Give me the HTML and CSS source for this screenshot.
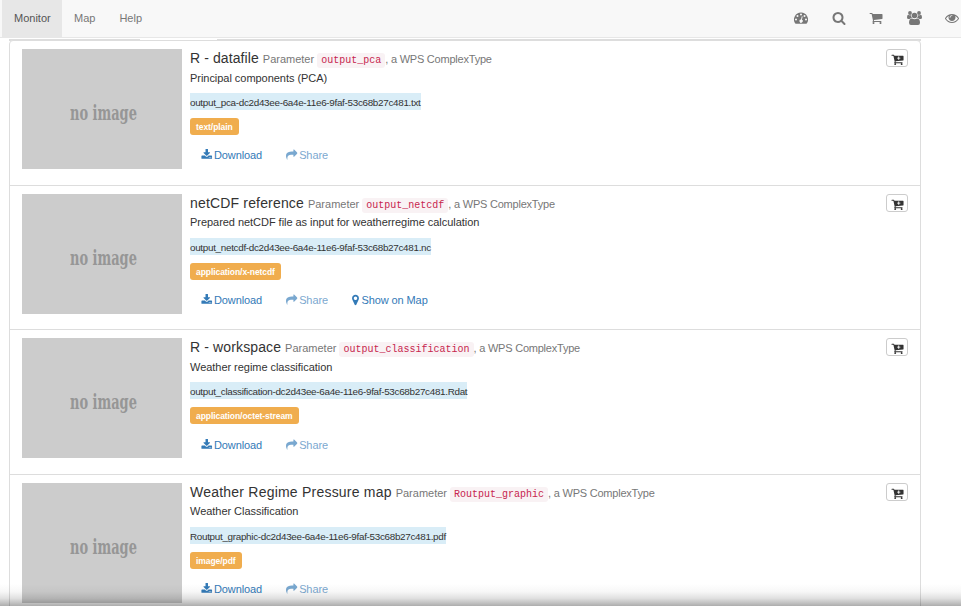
FILE: index.html
```html
<!DOCTYPE html>
<html lang="en">
<head>
<meta charset="utf-8">
<title>Monitor</title>
<link rel="stylesheet" href="styles.css">
</head>
<body>
<svg class="defs" width="0" height="0">
  <symbol id="search" viewBox="0 0 1792 1792"><path d="M1216 832q0-185-131.500-316.500t-316.500-131.500-316.500 131.500-131.500 316.500 131.500 316.500 316.500 131.500 316.500-131.500 131.500-316.500zm512 832q0 52-38 90t-90 38q-54 0-90-38l-343-342q-179 124-399 124-143 0-273.500-55.500t-225-150-150-225-55.500-273.500 55.500-273.500 150-225 225-150 273.500-55.500 273.500 55.500 225 150 150 225 55.500 273.500q0 220-124 399l343 343q37 37 37 90z"/></symbol>
  <symbol id="cart" viewBox="0 0 1792 1792"><path d="M704 1536q0 52-38 90t-90 38-90-38-38-90 38-90 90-38 90 38 38 90zm896 0q0 52-38 90t-90 38-90-38-38-90 38-90 90-38 90 38 38 90zm128-1088v512q0 24-16.500 42.500t-40.500 21.500l-1044 122q13 60 13 70 0 16-24 64h920q26 0 45 19t19 45-19 45-45 19h-1024q-26 0-45-19t-19-45q0-11 8-31.500t16-36 21.500-40 15.500-29.500l-177-823h-204q-26 0-45-19t-19-45 19-45 45-19h256q16 0 28.500 6.500t19.500 15.500 13 24.500 8 26 5.500 29.500 4.500 26h1201q26 0 45 19t19 45z"/></symbol>
  <symbol id="download" viewBox="0 0 1792 1792"><path d="M1344 1344q0-26-19-45t-45-19-45 19-19 45 19 45 45 19 45-19 19-45zm256 0q0-26-19-45t-45-19-45 19-19 45 19 45 45 19 45-19 19-45zm128-224v320q0 40-28 68t-68 28h-1472q-40 0-68-28t-28-68v-320q0-40 28-68t68-28h465l135 136q58 56 136 56t136-56l136-136h464q40 0 68 28t28 68zm-325-569q17 41-14 70l-448 448q-18 19-45 19t-45-19l-448-448q-31-29-14-70 17-39 59-39h256v-448q0-26 19-45t45-19h256q26 0 45 19t19 45v448h256q42 0 59 39z"/></symbol>
  <symbol id="share" viewBox="0 0 1792 1792"><path d="M1792 640q0 26-19 45l-512 512q-19 19-45 19t-45-19-19-45v-256h-224q-98 0-175.500 6t-154 21.500-133 42.500-105.500 69.500-80 101-48.500 138.500-17.500 181q0 55 5 123 0 6 2.500 23.500t2.500 26.500q0 15-8.500 25t-23.500 10q-16 0-28-17-7-9-13-22t-13.500-30-10.500-24q-127-285-127-451 0-199 53-333 162-403 875-403h224v-256q0-26 19-45t45-19 45 19l512 512q19 19 19 45z"/></symbol>
  <symbol id="marker" viewBox="384 0 1024 1792"><path d="M1152 640q0-106-75-181t-181-75-181 75-75 181 75 181 181 75 181-75 75-181zm256 0q0 109-33 179l-364 774q-16 33-47.500 52t-67.500 19-67.500-19-46.500-52l-365-774q-33-70-33-179 0-212 150-362t362-150 362 150 150 362z"/></symbol>
  <symbol id="eye" viewBox="0 0 1792 1792"><path d="M1664 960q-152-236-381-353 61 104 61 225 0 185-131.500 316.500t-316.500 131.500-316.500-131.500-131.500-316.500q0-121 61-225-229 117-381 353 133 205 333.500 326.500t434.500 121.500 434.500-121.500 333.500-326.500zm-720-384q0-20-14-34t-34-14q-125 0-214.500 89.500t-89.500 214.500q0 20 14 34t34 14 34-14 14-34q0-86 61-147t147-61q20 0 34-14t14-34zm848 384q0 34-20 69-140 230-376.500 368.500t-499.500 138.500-499.500-139-376.500-368q-20-35-20-69t20-69q140-229 376.500-368t499.500-139 499.500 139 376.500 368q20 35 20 69z"/></symbol>
  <symbol id="gauge" viewBox="0 0 14 14"><path fill-rule="evenodd" d="M7 1.500a7 7 0 0 0-5.900 10.800q.2.400.6.400h10.600q.4 0 .6-.4A7 7 0 0 0 7 1.500zM3 8.500a1 1 0 1 1-2 0 1 1 0 0 1 2 0zM4.500 5a1 1 0 1 1-2 0 1 1 0 0 1 2 0zM8 3.500a1 1 0 1 1-2 0 1 1 0 0 1 2 0zM11.500 5a1 1 0 1 1-2 0 1 1 0 0 1 2 0zM13 8.500a1 1 0 1 1-2 0 1 1 0 0 1 2 0zM8.700 5.500l-.8 3.200a1.600 1.600 0 1 1-.9-.2l.8-3.200z"/></symbol>
  <symbol id="users" viewBox="0 0 15 14"><circle cx="3" cy="2" r="1.900"/><circle cx="12" cy="2" r="1.900"/><circle cx="7.500" cy="4.500" r="2.800"/><path d="M4 4.200Q4 6 5 7q-1.500 0-2.400 1H1.500Q0 8 0 6.500 0 3.700 1.200 3.700q1.300.8 2.800.5zM11 4.200Q11 6 10 7q1.500 0 2.400 1h1.100Q15 8 15 6.500q0-2.800-1.200-2.800-1.300.8-2.800.5zM5 7.500q2.500 1.500 5 0 3 0 3 4.300 0 2.200-2 2.200H4q-2 0-2-2.200 0-4.300 3-4.300z"/></symbol>
  <symbol id="cartplus" viewBox="0 0 1792 1792"><use href="#cart"/><path class="plus" d="M1000 480h130v160h160v120h-160v160h-130v-160h-160v-120h160z"/></symbol>
</svg>
<header class="navbar">
  <nav class="tabs">
    <a class="tab active">Monitor</a><a class="tab">Map</a><a class="tab">Help</a>
  </nav>
  <div class="tools">
    <svg><use href="#gauge"/></svg>
    <svg><use href="#search"/></svg>
    <svg><use href="#cart"/></svg>
    <svg class="people"><use href="#users"/></svg>
    <svg><use href="#eye"/></svg>
  </div>
</header>
<main class="content">
  <div class="tabline"><span></span></div>
  <ul class="list">
    <li class="item">
      <div class="thumb"><span>no image</span></div>
      <div class="info">
        <h4 class="title"><span class="name n1">R - datafile</span> <small>Parameter <code>output_pca</code><span class="type">, a WPS ComplexType</span></small></h4>
        <p class="desc">Principal components (PCA)</p>
        <p class="file"><mark>output_pca-dc2d43ee-6a4e-11e6-9faf-53c68b27c481.txt</mark></p>
        <p class="mime"><span>text/plain</span></p>
        <div class="actions"><a><svg><use href="#download"/></svg>Download</a><a class="off"><svg><use href="#share"/></svg>Share</a></div>
      </div>
      <button class="add"><svg><use href="#cartplus"/></svg></button>
    </li>
    <li class="item">
      <div class="thumb"><span>no image</span></div>
      <div class="info">
        <h4 class="title"><span class="name n2">netCDF reference</span> <small>Parameter <code>output_netcdf</code><span class="type">, a WPS ComplexType</span></small></h4>
        <p class="desc">Prepared netCDF file as input for weatherregime calculation</p>
        <p class="file"><mark>output_netcdf-dc2d43ee-6a4e-11e6-9faf-53c68b27c481.nc</mark></p>
        <p class="mime"><span>application/x-netcdf</span></p>
        <div class="actions"><a><svg><use href="#download"/></svg>Download</a><a class="off"><svg><use href="#share"/></svg>Share</a><a class="map"><svg><use href="#marker"/></svg>Show on Map</a></div>
      </div>
      <button class="add"><svg><use href="#cartplus"/></svg></button>
    </li>
    <li class="item">
      <div class="thumb"><span>no image</span></div>
      <div class="info">
        <h4 class="title"><span class="name n3">R - workspace</span> <small>Parameter <code>output_classification</code><span class="type">, a WPS ComplexType</span></small></h4>
        <p class="desc">Weather regime classification</p>
        <p class="file"><mark>output_classification-dc2d43ee-6a4e-11e6-9faf-53c68b27c481.Rdat</mark></p>
        <p class="mime"><span>application/octet-stream</span></p>
        <div class="actions"><a><svg><use href="#download"/></svg>Download</a><a class="off"><svg><use href="#share"/></svg>Share</a></div>
      </div>
      <button class="add"><svg><use href="#cartplus"/></svg></button>
    </li>
    <li class="item">
      <div class="thumb"><span>no image</span></div>
      <div class="info">
        <h4 class="title"><span class="name n4">Weather Regime Pressure map</span> <small>Parameter <code>Routput_graphic</code><span class="type">, a WPS ComplexType</span></small></h4>
        <p class="desc">Weather Classification</p>
        <p class="file"><mark>Routput_graphic-dc2d43ee-6a4e-11e6-9faf-53c68b27c481.pdf</mark></p>
        <p class="mime"><span>image/pdf</span></p>
        <div class="actions"><a><svg><use href="#download"/></svg>Download</a><a class="off"><svg><use href="#share"/></svg>Share</a></div>
      </div>
      <button class="add"><svg><use href="#cartplus"/></svg></button>
    </li>
  </ul>
</main>
<div class="fade"></div>
</body>
</html>
```
FILE: styles.css
```css
* { box-sizing: border-box; }
body { margin: 0; height: 606px; overflow: hidden; background: #fff; color: #333; font: 11px/16px "Liberation Sans", Arial, sans-serif; }
.defs { display: block; height: 0; }
svg { fill: currentColor; }
h4, p, ul { margin: 0; padding: 0; font-weight: normal; }
.navbar { display: flex; justify-content: space-between; height: 38px; padding: 0 2px; background: #f8f8f8; border-bottom: 1px solid #e7e7e7; color: #777; }
.tabs { display: flex; }
.tab { padding: 10px 12px 0; height: 37px; }
.tab.active { background: #e7e7e7; color: #555; width: 60px; }
.tools { display: flex; gap: 23.500px; padding-top: 11px; }
.tools svg { width: 14px; height: 14px; }
.tools .people { width: 15px; }
.content { width: 912px; margin-left: 9px; }
.tabline { height: 2px; background: #ddd; margin-top: 1px; margin-bottom: -1px; }
.tabline span { display: block; width: 77px; height: 1px; margin-left: 131px; background: #fff; }
.list { list-style: none; border: 1px solid #ddd; border-radius: 4px 4px 0 0; background: #fff; }
.item { display: flex; height: 144.6px; padding: 8px 12px 0; border-bottom: 1px solid #ddd; }
.thumb { flex: none; width: 160px; height: 120px; margin-right: 8px; padding-left: 2px; background: #ccc; color: #969696; text-align: center; font: bold 20px/128px "DejaVu Serif Condensed", "DejaVu Serif", serif; }
.thumb span { display: inline-block; transform: scaleX(.72); }
.info { flex: 1; min-width: 0; white-space: nowrap; }
.title { height: 19.650px; font-size: 14px; line-height: 19px; }
.n1 { letter-spacing: .1px; }
.n2 { letter-spacing: .17px; }
.n3 { letter-spacing: .13px; }
.n4 { letter-spacing: .22px; }
.title small { font-size: 11px; color: #777; }
.title code { padding: 2px 4px; border-radius: 3px; background: #f9f2f4; color: #c7254e; font: 10px/11px "Liberation Mono", monospace; }
.type { letter-spacing: -.22px; }
.desc { height: 24.350px; line-height: 18px; letter-spacing: -.04px; }
.file { height: 25px; font-size: 9.900px; line-height: 19px; letter-spacing: -.31px; }
.file mark { display: inline-block; height: 17px; background: #d9edf7; color: #333; }
.mime { height: 28.350px; display: flex; }
.mime span { height: 17px; padding: 0 6px; border-radius: 3px; background: #f0ad4e; color: #fff; font-size: 8.500px; font-weight: bold; line-height: 18px; letter-spacing: -.07px; }
.actions { display: flex; gap: 24px; padding-left: 11px; color: #337ab7; line-height: 18px; letter-spacing: -.1px; }
.actions a { display: flex; }
.actions .off { opacity: .65; }
.actions svg { width: 11.500px; height: 11.500px; margin: 3px 1.500px 0 0; }
.actions .map svg { width: 7px; height: 12px; margin-right: 2.500px; }
.add { flex: none; display: flex; justify-content: center; width: 22px; height: 18px; padding: 3px 0 0; border: 1px solid #ccc; border-radius: 3px; background: #fff; color: #333; }
.add svg { width: 13px; height: 13px; }
.plus { fill: #fff; }
.fade { position: absolute; left: 0; right: 0; bottom: 0; height: 22px; background: linear-gradient(rgba(0,0,0,0), rgba(0,0,0,.03) 35%, rgba(0,0,0,.12) 65%, rgba(0,0,0,.32)); }
```
